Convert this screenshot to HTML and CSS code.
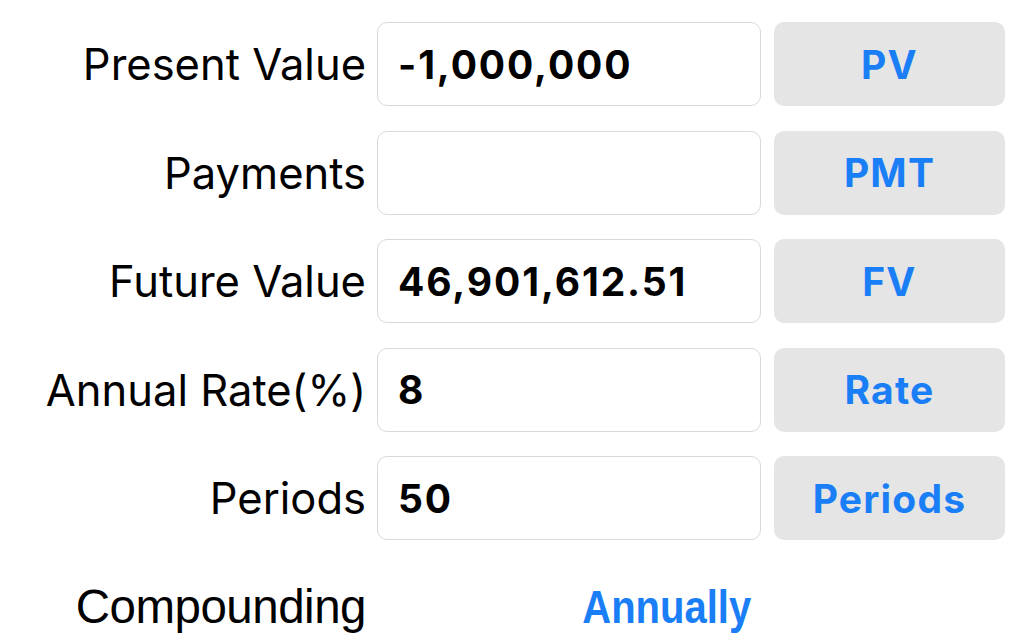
FILE: index.html
```html
<!DOCTYPE html>
<html lang="en">
<head>
<meta charset="utf-8">
<title>TVM Calculator</title>
<link rel="stylesheet" href="styles.css">
</head>
<body>
<main class="calc">
  <div class="row">
    <div class="label">Present Value</div>
    <div class="field">-1,000,000</div>
    <button class="btn">PV</button>
  </div>
  <div class="row">
    <div class="label">Payments</div>
    <div class="field"></div>
    <button class="btn">PMT</button>
  </div>
  <div class="row">
    <div class="label">Future Value</div>
    <div class="field">46,901,612.51</div>
    <button class="btn">FV</button>
  </div>
  <div class="row">
    <div class="label">Annual Rate(%)</div>
    <div class="field">8</div>
    <button class="btn">Rate</button>
  </div>
  <div class="row">
    <div class="label">Periods</div>
    <div class="field">50</div>
    <button class="btn">Periods</button>
  </div>
  <div class="row">
    <div class="label label-alt">Compounding</div>
    <div class="choice"><span class="choice-text">Annually</span></div>
  </div>
</main>
</body>
</html>
```
FILE: styles.css
```css
html, body {
  margin: 0;
  padding: 0;
  background: #ffffff;
  overflow: hidden;
}
body {
  width: 1024px;
  height: 642px;
}
.calc {
  display: flex;
  flex-direction: column;
  gap: 24.5px;
  padding-top: 22px;
}
.row {
  display: grid;
  grid-template-columns: 366px 384px 231px;
  column-gap: 11px;
  height: 84px;
  align-items: center;
}
.row > .btn {
  margin-left: 2px;
}
.label {
  text-align: right;
  font-family: Inter, "Noto Sans", sans-serif;
  font-size: 43.5px;
  color: #000;
  white-space: nowrap;
}
.label-alt {
  font-family: "Liberation Sans", Arial, sans-serif;
  font-size: 47.5px;
  letter-spacing: -0.5px;
}
.field {
  box-sizing: border-box;
  height: 84px;
  border: 1px solid #d9d9d9;
  border-radius: 10px;
  background: #fff;
  padding-left: 20px;
  display: flex;
  align-items: center;
  font-family: Inter, "Noto Sans", sans-serif;
  font-weight: 700;
  font-size: 39px;
  letter-spacing: 1.9px;
  color: #000;
  white-space: nowrap;
}
.btn {
  box-sizing: border-box;
  height: 84px;
  width: 231px;
  border: none;
  border-radius: 10px;
  background: #e5e5e5;
  font-family: Inter, "Noto Sans", sans-serif;
  font-weight: 700;
  font-size: 39px;
  letter-spacing: 1.2px;
  color: #1a7ef6;
  padding: 0;
}
.choice {
  text-align: right;
  padding-right: 10px;
}
.choice-text {
  display: inline-block;
  font-family: "Liberation Sans", Arial, sans-serif;
  font-weight: 700;
  font-size: 46px;
  color: #1a7ef6;
  transform: scaleX(0.87);
  transform-origin: right center;
}
```
